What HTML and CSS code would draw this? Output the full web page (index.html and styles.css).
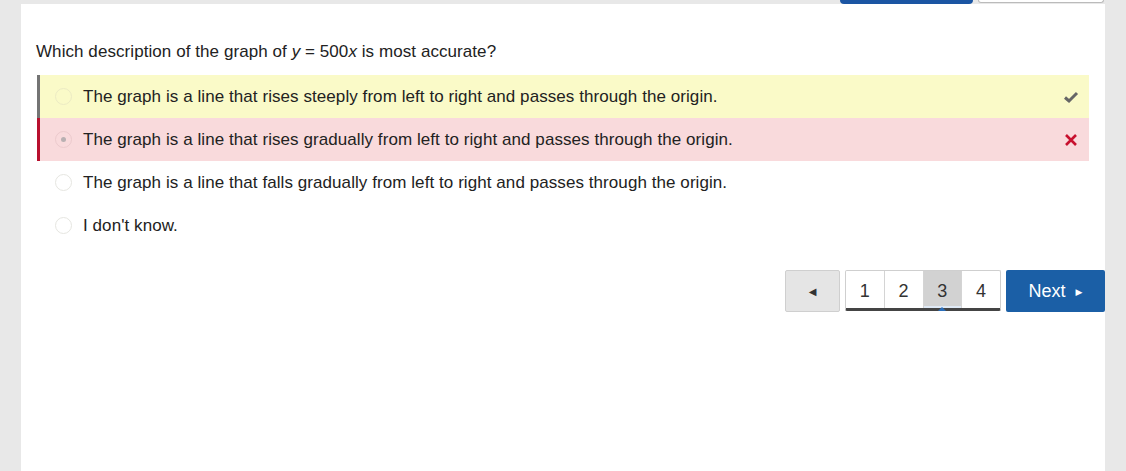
FILE: index.html
```html
<!DOCTYPE html>
<html>
<head>
<meta charset="utf-8">
<link rel="stylesheet" href="styles.css">
</head>
<body>
<div class="topbar">
  <div class="tb-btn tb-primary"></div>
  <div class="tb-btn tb-secondary"></div>
</div>
<main class="panel">
  <p class="question">Which description of the graph of <i>y</i> = 500<i>x</i> is most accurate?</p>
  <div class="options">
    <div class="opt opt-correct">
      <span class="radio"></span>
      <span class="opt-text">The graph is a line that rises steeply from left to right and passes through the origin.</span>
      <svg class="mark" width="16" height="14" viewBox="0 0 16 14"><path d="M2 7.5 L6 11 L14 3" fill="none" stroke="#666" stroke-width="3"/></svg>
    </div>
    <div class="opt opt-wrong">
      <span class="radio radio-on"></span>
      <span class="opt-text">The graph is a line that rises gradually from left to right and passes through the origin.</span>
      <svg class="mark" width="16" height="14" viewBox="0 0 16 14"><path d="M3 2 L13 12 M13 2 L3 12" fill="none" stroke="#c8102e" stroke-width="2.6"/></svg>
    </div>
    <div class="opt">
      <span class="radio"></span>
      <span class="opt-text">The graph is a line that falls gradually from left to right and passes through the origin.</span>
    </div>
    <div class="opt">
      <span class="radio"></span>
      <span class="opt-text">I don't know.</span>
    </div>
  </div>
  <div class="pager">
    <button class="prev">&#9664;</button>
    <div class="pages">
      <span class="page">1</span>
      <span class="page">2</span>
      <span class="page current">3</span>
      <span class="page">4</span>
    </div>
    <button class="next">Next <span class="arrow">&#9654;</span></button>
  </div>
</main>
</body>
</html>
```
FILE: styles.css
```css
html, body {
  margin: 0;
  padding: 0;
  background: #e8e8e8;
  font-family: "Liberation Sans", Arial, sans-serif;
  color: #222;
  height: 471px;
  overflow: hidden;
}
.topbar {
  height: 4px;
  display: flex;
  justify-content: flex-end;
  align-items: flex-end;
  gap: 5px;
  padding-right: 22px;
}
.tb-btn {
  height: 4px;
  border-radius: 0 0 5px 5px;
  box-sizing: border-box;
}
.tb-primary {
  width: 133px;
  background: #1b55a3;
}
.tb-secondary {
  width: 126px;
  background: #fff;
  border: 1px solid #bbb;
  border-top: none;
  height: 3px;
  align-self: flex-start;
}
.panel {
  margin-left: 21px;
  width: 1084px;
  background: #fff;
  height: 467px;
  box-sizing: border-box;
  padding: 0 16px 0 15px;
  display: flex;
  flex-direction: column;
}
.question {
  margin: 0;
  padding-top: 38px;
  font-size: 17px;
  letter-spacing: 0.07px;
  line-height: 20px;
  height: 33px;
  color: #222;
}
.options {
  display: flex;
  flex-direction: column;
  margin-left: 1px;
}
.opt {
  height: 43px;
  display: flex;
  align-items: center;
  border-left: 3px solid transparent;
  padding-left: 15px;
  padding-right: 10px;
  font-size: 17px;
  letter-spacing: 0.07px;
  color: #222;
}
.opt-correct {
  background: #fafac8;
  border-left-color: #747474;
}
.opt-wrong {
  background: #f9dadc;
  border-left-color: #b8102e;
}
.radio {
  width: 17px;
  height: 17px;
  border-radius: 50%;
  border: 1px solid #e6e6e1;
  box-sizing: border-box;
  flex: none;
  display: flex;
  align-items: center;
  justify-content: center;
  margin-right: 11px;
}
.opt-correct .radio { border-color: #ecebc4; }
.radio-on::after {
  content: "";
  width: 5px;
  height: 5px;
  border-radius: 50%;
  background: #b9b0b2;
}
.opt-wrong .radio { border-color: #eccacd; }
.opt-text { flex: 1; }
.mark { flex: none; }
.pager {
  display: flex;
  justify-content: flex-end;
  align-items: flex-start;
  gap: 5px;
  margin-top: 23px;
  margin-right: -16px;
}
.prev {
  width: 55px;
  height: 42px;
  background: #e5e5e5;
  border: 1px solid #cfcfcf;
  border-radius: 2px;
  font-size: 10px;
  color: #333;
  padding: 0;
  font-family: "DejaVu Sans", sans-serif;
}
.pages {
  display: flex;
  width: 156px;
  border: 1px solid #cfcfcf;
  border-bottom: 3px solid #444;
  border-radius: 2px;
  height: 41px;
  box-sizing: border-box;
}
.page {
  flex: 1;
  display: flex;
  align-items: center;
  justify-content: center;
  padding-top: 3px;
  font-size: 18px;
  color: #333;
  border-right: 1px solid #d4d4d4;
  position: relative;
}
.page:last-child { border-right: none; }
.page.current {
  background: #d2d2d2;
  box-shadow: inset 0 -2px 0 #dfe9f5;
}
.page.current::after {
  content: "";
  position: absolute;
  bottom: -3px;
  left: 50%;
  margin-left: -4px;
  border-left: 4px solid transparent;
  border-right: 4px solid transparent;
  border-bottom: 4px solid #2a6ebb;
  width: 0;
  height: 0;
}
.next {
  width: 99px;
  height: 42px;
  background: #1b5fa6;
  border: none;
  border-radius: 2px;
  color: #fff;
  font-size: 18px;
  font-family: "Liberation Sans", Arial, sans-serif;
  padding: 0 0 0 0;
}
.next .arrow {
  font-size: 9px;
  font-family: "DejaVu Sans", sans-serif;
  vertical-align: 2px;
  margin-left: 5px;
}
```
